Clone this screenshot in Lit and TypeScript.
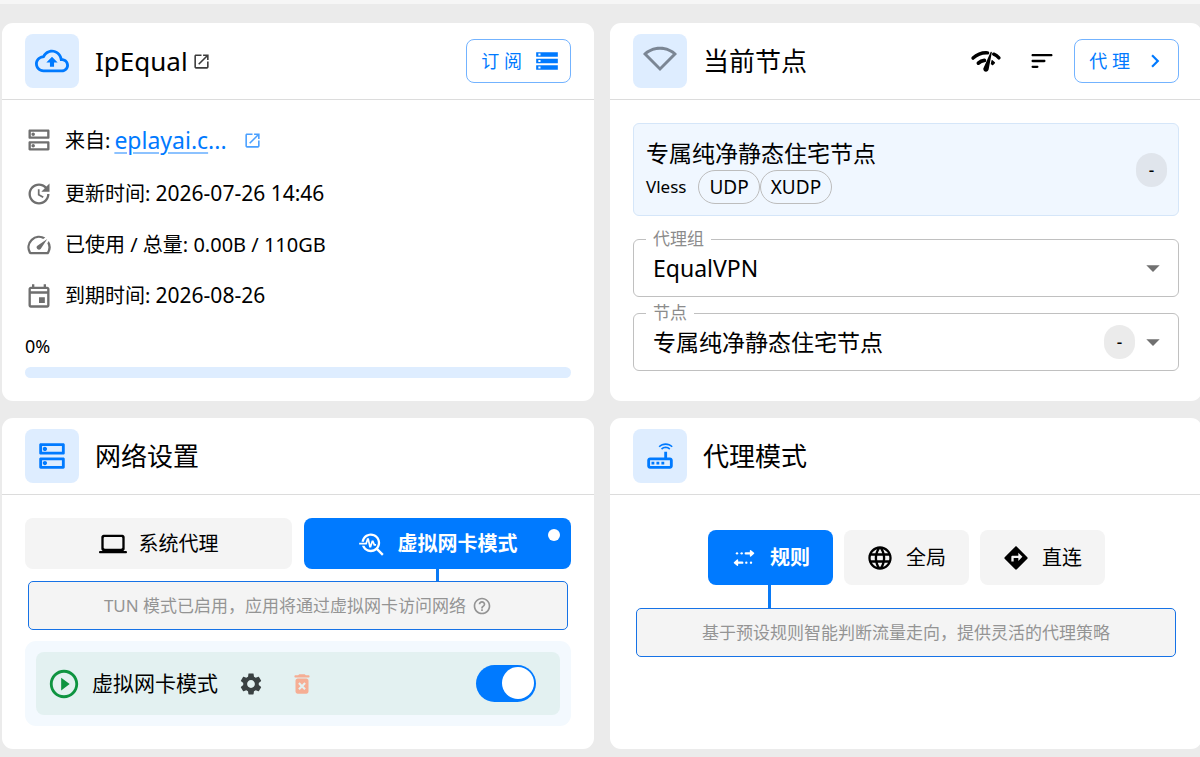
import { LitElement, html, css, svg } from "lit";
import { customElement, property, state } from "lit/decorators.js";

const PATHS: Record<string, string> = {
  cloud:
    "M19.35 10.04C18.67 6.59 15.64 4 12 4 9.11 4 6.6 5.64 5.35 8.04 2.34 8.36 0 10.91 0 14c0 3.31 2.69 6 6 6h13c2.76 0 5-2.24 5-5 0-2.64-2.05-4.78-4.65-4.96zM19 18H6c-2.21 0-4-1.79-4-4 0-2.05 1.53-3.76 3.56-3.97l1.07-.11.5-.95C8.08 7.14 9.94 6 12 6c2.62 0 4.88 1.86 5.39 4.43l.3 1.5 1.53.11c1.56.1 2.78 1.41 2.78 2.96 0 1.65-1.35 3-3 3zM8 13h2.55v3h2.9v-3H16l-4-4z",
  open: "M19 19H5V5h7V3H5c-1.11 0-2 .9-2 2v14c0 1.1.89 2 2 2h14c1.1 0 2-.9 2-2v-7h-2v7zM14 3v2h3.59l-9.83 9.83 1.41 1.41L19 6.41V10h2V3h-7z",
  storage:
    "M2 20h20v-4H2v4zm2-3h2v2H4v-2zM2 4v4h20V4H2zm4 3H4V5h2v2zm-4 7h20v-4H2v4zm2-3h2v2H4v-2z",
  dns: "M19 15v4H5v-4h14m1-2H4c-.55 0-1 .45-1 1v6c0 .55.45 1 1 1h16c.55 0 1-.45 1-1v-6c0-.55-.45-1-1-1zM7 18.5c-.82 0-1.5-.67-1.5-1.5s.68-1.5 1.5-1.5 1.5.67 1.5 1.5-.67 1.5-1.5 1.5zM19 5v4H5V5h14m1-2H4c-.55 0-1 .45-1 1v6c0 .55.45 1 1 1h16c.55 0 1-.45 1-1V4c0-.55-.45-1-1-1zM7 8.5c-.82 0-1.5-.67-1.5-1.5S6.18 5.5 7 5.5s1.5.68 1.5 1.5S7.83 8.5 7 8.5z",
  update:
    "M11 8v5l4.25 2.52.77-1.28-3.52-2.09V8H11zm10 2V3l-2.64 2.64C16.74 4.01 14.49 3 12 3c-4.97 0-9 4.03-9 9s4.03 9 9 9 9-4.03 9-9h-2c0 3.86-3.14 7-7 7s-7-3.14-7-7 3.14-7 7-7c1.93 0 3.68.79 4.95 2.05L14 10h7z",
  speed:
    "M20.38 8.57l-1.23 1.85a8 8 0 0 1-.22 7.58H5.07A8 8 0 0 1 15.58 6.85l1.85-1.23A10 10 0 0 0 3.35 19a2 2 0 0 0 1.72 1h13.85a2 2 0 0 0 1.74-1 10 10 0 0 0-.27-10.44zM10.59 15.41a2 2 0 0 0 2.83 0l5.66-8.49-8.49 5.66a2 2 0 0 0 0 2.83z",
  event:
    "M19 4h-1V2h-2v2H8V2H6v2H5c-1.11 0-1.99.9-1.99 2L3 20c0 1.1.89 2 2 2h14c1.1 0 2-.9 2-2V6c0-1.1-.9-2-2-2zm0 16H5V10h14v10zm0-12H5V6h14v2zm-7 5h5v5h-5v-5z",
  wifi: "M12 4c3.33 0 6.49 1.08 9.08 3.07L12 16.17l-9.08-9.1C5.51 5.08 8.67 4 12 4m0-2C7.31 2 3.07 3.9 0 6.98L12 19 24 6.98C20.93 3.9 16.69 2 12 2z",
  chevron: "M10 6 8.59 7.41 13.17 12l-4.58 4.59L10 18l6-6z",
  router:
    "M20.2 5.9l.8-.8C19.6 3.7 17.8 3 16 3s-3.6.7-5 2.1l.8.8C13 4.8 14.5 4.2 16 4.2s3 .6 4.2 1.7zm-.9.8c-.9-.9-2.1-1.4-3.3-1.4s-2.4.5-3.3 1.4l.8.8c.7-.7 1.6-1 2.5-1 .9 0 1.8.3 2.5 1l.8-.8zM19 13h-2V9h-2v4H5c-1.1 0-2 .9-2 2v4c0 1.1.9 2 2 2h14c1.1 0 2-.9 2-2v-4c0-1.1-.9-2-2-2zm0 6H5v-4h14v4zM6 16h2v2H6zm3.500 0h2v2h-2zm3.500 0h2v2h-2z",
  computer:
    "M20 18c1.1 0 1.99-.9 1.99-2L22 6c0-1.1-.9-2-2-2H4c-1.1 0-2 .9-2 2v10c0 1.1.9 2 2 2H1c-.55 0-1 .45-1 1s.45 1 1 1h22c.55 0 1-.45 1-1s-.45-1-1-1h-3zM5 6h14c.55 0 1 .45 1 1v8c0 .55-.45 1-1 1H5c-.55 0-1-.45-1-1V7c0-.55.45-1 1-1z",
  troubleshoot:
    "M22 20.59l-4.69-4.69C18.37 14.55 19 12.85 19 11c0-4.42-3.58-8-8-8-4.08 0-7.44 3.05-7.93 7h2.02C5.57 7.17 8.03 5 11 5c3.31 0 6 2.69 6 6s-2.69 6-6 6c-2.42 0-4.5-1.44-5.45-3.5H3.4C4.45 16.69 7.46 19 11 19c1.85 0 3.55-.63 4.9-1.69L20.59 22 22 20.59zM8.43 9.69 9.65 15h1.64l1.26-3.78.95 2.28h2V12h-1l-1.25-3h-1.54l-1.12 3.37L9.35 7H7.7l-1.25 4H1v1.500h6.550z",
  language:
    "M11.99 2C6.47 2 2 6.48 2 12s4.47 10 9.99 10C17.52 22 22 17.52 22 12S17.52 2 11.99 2zm6.93 6h-2.95c-.32-1.25-.78-2.45-1.38-3.56 1.84.63 3.37 1.91 4.33 3.56zM12 4.04c.83 1.2 1.48 2.53 1.91 3.96h-3.82c.43-1.43 1.08-2.76 1.91-3.96zM4.26 14C4.1 13.36 4 12.69 4 12s.1-1.36.26-2h3.38c-.08.66-.14 1.32-.14 2 0 .68.06 1.34.14 2H4.26zm.82 2h2.95c.32 1.25.78 2.45 1.38 3.56-1.84-.63-3.37-1.9-4.33-3.56zm2.95-8H5.08c.96-1.66 2.49-2.93 4.33-3.56C8.81 5.55 8.35 6.75 8.03 8zM12 19.96c-.83-1.2-1.48-2.53-1.91-3.96h3.82c-.43 1.43-1.08 2.76-1.91 3.96zM14.34 14H9.66c-.09-.66-.16-1.32-.16-2 0-.68.07-1.35.16-2h4.68c.09.65.16 1.32.16 2 0 .68-.07 1.34-.16 2zm.25 5.56c.6-1.11 1.06-2.31 1.38-3.56h2.95c-.96 1.65-2.49 2.93-4.33 3.56zM16.36 14c.08-.66.14-1.32.14-2 0-.68-.06-1.34-.14-2h3.38c.16.64.26 1.31.26 2s-.1 1.36-.26 2h-3.38z",
  directions:
    "M21.71 11.29l-9-9c-.39-.39-1.02-.39-1.41 0l-9 9c-.39.39-.39 1.02 0 1.41l9 9c.39.39 1.02.39 1.41 0l9-9c.39-.38.39-1.01 0-1.41zM14 14.5V12h-4v3H8v-4c0-.55.45-1 1-1h5V7.5l3.5 3.5-3.5 3.5z",
  help: "M11 18h2v-2h-2v2zm1-16C6.48 2 2 6.48 2 12s4.48 10 10 10 10-4.48 10-10S17.52 2 12 2zm0 18c-4.41 0-8-3.59-8-8s3.59-8 8-8 8 3.59 8 8-3.59 8-8 8zm0-14c-2.21 0-4 1.79-4 4h2c0-1.1.9-2 2-2s2 .9 2 2c0 2-3 1.75-3 5h2c0-2.25 3-2.5 3-5 0-2.21-1.79-4-4-4z",
  play: "M10 16.5l6-4.5-6-4.5v9zM12 2C6.48 2 2 6.48 2 12s4.48 10 10 10 10-4.48 10-10S17.52 2 12 2zm0 18c-4.41 0-8-3.59-8-8s3.59-8 8-8 8 3.59 8 8-3.59 8-8 8z",
  settings:
    "M19.14 12.94c.04-.3.06-.61.06-.94 0-.32-.02-.64-.07-.94l2.03-1.58c.18-.14.23-.41.12-.61l-1.92-3.32c-.12-.22-.37-.29-.59-.22l-2.39.96c-.5-.38-1.03-.7-1.62-.94l-.36-2.54c-.04-.24-.24-.41-.48-.41h-3.84c-.24 0-.43.17-.47.41l-.36 2.54c-.59.24-1.13.57-1.62.94l-2.39-.96c-.22-.08-.47 0-.59.22L2.74 8.87c-.12.21-.08.47.12.61l2.03 1.58c-.05.3-.09.63-.09.94s.02.64.07.94l-2.03 1.58c-.18.14-.23.41-.12.61l1.92 3.32c.12.22.37.29.59.22l2.39-.96c.5.38 1.03.7 1.62.94l.36 2.54c.05.24.24.41.48.41h3.84c.24 0 .44-.17.47-.41l.36-2.54c.59-.24 1.13-.56 1.62-.94l2.39.96c.22.08.47 0 .59-.22l1.92-3.32c.12-.22.07-.47-.12-.61l-2.01-1.58zM12 15.6c-1.98 0-3.6-1.62-3.6-3.6s1.62-3.6 3.6-3.6 3.6 1.62 3.6 3.6-1.62 3.6-3.6 3.6z",
  trash:
    "M6 19c0 1.1.9 2 2 2h8c1.1 0 2-.9 2-2V9c0-1.1-.9-2-2-2H8c-1.1 0-2 .9-2 2v10zm2.46-7.12 1.41-1.41L12 12.59l2.12-2.12 1.41 1.41L13.41 14l2.12 2.12-1.41 1.41L12 15.41l-2.12 2.12-1.41-1.41L10.59 14l-2.13-2.12zM15.5 4l-1-1h-5l-1 1H6c-.55 0-1 .45-1 1s.45 1 1 1h12c.55 0 1-.45 1-1s-.45-1-1-1z",
  sort: "M4 18h4c.55 0 1-.45 1-1s-.45-1-1-1H4c-.55 0-1 .45-1 1s.45 1 1 1zM3 7c0 .55.45 1 1 1h16c.55 0 1-.45 1-1s-.45-1-1-1H4c-.55 0-1 .45-1 1zm1 6h10c.55 0 1-.45 1-1s-.45-1-1-1H4c-.55 0-1 .45-1 1s.45 1 1 1z",
  drop: "M7 10l5 5 5-5z",
};

const NETWORK_CHECK = svg`
  <path d="M15.9 5c-.17 0-.32.09-.41.23l-.07.15-5.18 11.65c-.16.29-.26.61-.26.96 0 1.11.9 2.01 2.01 2.01.96 0 1.77-.68 1.96-1.59l.01-.03L16.4 5.5c0-.28-.22-.5-.5-.5z"/>
  <path d="M2.300 9.800C5.300 7.100 9.400 5.600 13.200 5.900M17.800 6.900C19.300 7.500 20.600 8.400 21.700 9.600" fill="none" stroke="currentColor" stroke-width="2.600" stroke-linecap="round"/>
  <path d="M6.300 13.600c1.200-1.100 2.700-1.800 4.500-2" fill="none" stroke="currentColor" stroke-width="2.800" stroke-linecap="round"/>
  <path d="M16.600 11.800l-.5 2.300.9.600 1.300-1.400z" stroke="currentColor" stroke-width="1" stroke-linejoin="round"/>`;

const MULTIPLE_STOP = svg`
  <path d="M13.500 8h5M10.500 16h-5" fill="none" stroke="currentColor" stroke-width="2" stroke-linecap="round"/>
  <path d="M17.600 5.700v4.600L20.200 8zM6.400 13.700v4.600L3.800 16z" stroke="currentColor" stroke-width="1.200" stroke-linejoin="round"/>
  <circle cx="10" cy="8" r="1"/><circle cx="6" cy="8" r="1"/><circle cx="14" cy="16" r="1"/><circle cx="18" cy="16" r="1"/>`;

function icon(name: string, size: number) {
  const body =
    name === "networkCheck"
      ? NETWORK_CHECK
      : name === "multipleStop"
        ? MULTIPLE_STOP
        : svg`<path d=${PATHS[name]} />`;
  return html`<svg class="icon" width=${size} height=${size} viewBox="0 0 24 24" fill="currentColor" aria-hidden="true">${body}</svg>`;
}

const base = css`
  * {
    box-sizing: border-box;
  }
  .icon {
    display: block;
    flex: none;
  }
  button {
    font: inherit;
    color: inherit;
    margin: 0;
    padding: 0;
    border: 0;
    background: none;
    cursor: pointer;
  }
`;

@customElement("panel-card")
export class PanelCard extends LitElement {
  @property() icon = "";
  @property() heading = "";
  @property({ type: Boolean }) muted = false;

  static styles = [
    base,
    css`
      :host {
        display: flex;
        flex-direction: column;
        min-width: 0;
        background: #fff;
        border-radius: 11px;
      }
      .head {
        display: flex;
        align-items: center;
        padding: 11px 23px;
        border-bottom: 1px solid #dcdcdc;
      }
      .badge {
        display: grid;
        place-items: center;
        width: 54px;
        height: 54px;
        margin-right: 16px;
        border-radius: 8px;
        background: #deedff;
        color: #007aff;
      }
      .badge.muted {
        color: #7b8694;
      }
      .heading {
        margin: 0;
        font-size: 26px;
        line-height: 36px;
        font-weight: 400;
      }
      .tools {
        display: flex;
        flex: 1;
        align-items: center;
      }
      .body {
        flex: 1;
        padding: 23px;
      }
    `,
  ];

  render() {
    return html`
      <header class="head">
        <div class="badge ${this.muted ? "muted" : ""}">${icon(this.icon, 34)}</div>
        <h2 class="heading">${this.heading}</h2>
        <div class="tools"><slot name="tools"></slot></div>
      </header>
      <div class="body"><slot></slot></div>
    `;
  }
}

@customElement("app-root")
export class AppRoot extends LitElement {
  @state() private mode = "rule";
  @state() private tab = "tun";

  static styles = [
    base,
    css`
      :host {
        display: block;
        min-height: 100vh;
        overflow: hidden;
        border-top: 4px solid #f6f6f6;
        background: #ebebeb;
        color: #000;
        font-family: "Noto Sans", "Noto Sans CJK SC", sans-serif;
        font-size: 20px;
        line-height: 29px;
      }
      .grid {
        display: grid;
        grid-template-columns: 1fr 1fr;
        grid-template-rows: auto minmax(330px, auto);
        gap: 17px 16px;
        margin: 19px -2px 9px 2px;
      }
      .grow {
        flex: 1;
      }
      .tool-link {
        margin-left: 4px;
        color: #3c3c3c;
      }
      .outlined {
        display: flex;
        align-items: center;
        gap: 12px;
        height: 44px;
        padding: 0 10px 0 14px;
        border: 1px solid #73b3ff;
        border-radius: 8px;
        color: #007aff;
        font-size: 18px;
        line-height: 26px;
      }
      .tool {
        margin-right: 18px;
      }
      .tool.wide {
        margin-right: 26px;
      }

      .facts {
        display: flex;
        flex-direction: column;
        gap: 22px;
      }
      .fact {
        display: flex;
        align-items: center;
        gap: 12px;
      }
      .fact .icon {
        color: #6f6f6f;
      }
      .fact.source {
        height: 34px;
      }
      .value {
        font-size: 21px;
      }
      .site {
        display: flex;
        align-items: center;
        gap: 16px;
        color: #007aff;
        font-size: 23px;
        line-height: 34px;
        text-decoration: none;
      }
      .site .icon {
        color: #4aa0ff;
      }
      .site .name {
        text-decoration: underline;
        text-decoration-color: #8cc2ff;
        text-decoration-thickness: 2px;
        text-underline-offset: 3px;
      }
      .source-text {
        display: flex;
        align-items: center;
        gap: 4px;
      }
      .percent {
        display: block;
        font-size: 18px;
        line-height: 28px;
      }
      .usage {
        display: block;
        appearance: none;
        width: 100%;
        height: 11px;
        margin-top: 7px;
        border: 0;
        border-radius: 6px;
        overflow: hidden;
        background: #deedff;
      }
      .usage::-webkit-progress-bar {
        background: #deedff;
      }
      .usage::-webkit-progress-value {
        background: #007aff;
      }

      .node {
        display: flex;
        align-items: center;
        justify-content: space-between;
        height: 93px;
        padding: 0 11px 0 12px;
        border: 1px solid #d5e6f9;
        border-radius: 6px;
        background: #f0f7ff;
      }
      .node-name {
        font-size: 23px;
        line-height: 34px;
      }
      .node-meta {
        display: flex;
        align-items: center;
        font-size: 17px;
        line-height: 24px;
      }
      .proto {
        margin-right: 12px;
      }
      .chip {
        padding: 0 10px;
        border: 1px solid #bdbdbd;
        border-radius: 17px;
        font-size: 19px;
        line-height: 32px;
      }
      .delay {
        flex: none;
        width: 31px;
        border-radius: 17px;
        background: #e0e5ec;
        font-size: 17px;
        font-weight: 500;
        line-height: 34px;
        text-align: center;
      }
      .delay.plain {
        background: #ebebeb;
      }
      .field {
        position: relative;
        display: flex;
        align-items: center;
        height: 58px;
        margin-top: 16px;
        border: 1px solid #c0c0c0;
        border-radius: 6px;
      }
      .field.first {
        margin-top: 23px;
      }
      .field label {
        position: absolute;
        top: -14px;
        left: 12px;
        padding: 0 7px;
        background: #fff;
        color: #8c8c8c;
        font-size: 17px;
        line-height: 26px;
      }
      .field select {
        flex: 1;
        min-width: 0;
        height: 100%;
        padding: 0 0 0 19px;
        border: 0;
        outline: 0;
        appearance: none;
        background: transparent;
        color: inherit;
        font: inherit;
        font-size: 23px;
        line-height: 34px;
      }
      .field .icon {
        margin: 0 9px 0 2px;
        color: #707070;
        pointer-events: none;
      }

      .tabs {
        display: grid;
        grid-template-columns: 1fr 1fr;
        gap: 12px;
      }
      .modes {
        display: flex;
        justify-content: center;
        gap: 11px;
        padding-top: 12px;
      }
      .choice {
        position: relative;
        display: flex;
        align-items: center;
        justify-content: center;
        gap: 12px;
        height: 51px;
        border-radius: 8px;
        background: #f4f4f4;
      }
      .modes .choice {
        width: 125px;
        height: 55px;
      }
      .choice.active {
        background: #007aff;
        color: #fff;
        font-weight: 700;
      }
      .choice.active::after {
        content: "";
        position: absolute;
        top: 100%;
        left: 50%;
        width: 3px;
        height: 12px;
        margin-left: -2px;
        background: #0a7af5;
      }
      .modes .choice.active::after {
        height: 23px;
      }
      .dot {
        position: absolute;
        top: 11px;
        right: 11px;
        width: 12px;
        height: 12px;
        border-radius: 50%;
        background: #fff;
      }
      .note {
        display: flex;
        align-items: center;
        justify-content: center;
        gap: 6px;
        min-height: 49px;
        margin: 12px 3px 0;
        border: 1px solid #1672e6;
        border-radius: 5px;
        background: #f4f4f4;
        color: #949494;
        font-size: 17px;
        line-height: 26px;
      }
      .note.far {
        margin-top: 23px;
      }
      .tray {
        margin-top: 11px;
        padding: 11px;
        border-radius: 11px;
        background: #f3f9fe;
      }
      .row {
        display: flex;
        align-items: center;
        height: 63px;
        padding: 0 24px 0 11px;
        border-radius: 8px;
        background: #e3f1f1;
        font-size: 21px;
      }
      .row .play {
        margin-right: 11px;
        color: #0e9440;
      }
      .gear {
        margin: 0 25px 0 20px;
        color: #3a4142;
      }
      .remove {
        color: #f6ae94;
      }
      .switch {
        appearance: none;
        width: 60px;
        height: 37px;
        margin: 0;
        padding: 2px 3px;
        border-radius: 19px;
        background: #007aff;
        cursor: pointer;
      }
      .switch::before {
        content: "";
        display: block;
        width: 32px;
        height: 32px;
        border-radius: 50%;
        background: #fff;
      }
      .switch:checked::before {
        margin-left: 23px;
      }
    `,
  ];

  private choice(id: string, label: string, glyph: string, current: string, pick: (id: string) => void) {
    const active = id === current;
    return html`<button class="choice ${active ? "active" : ""}" aria-pressed=${active} @click=${() => pick(id)}>
      ${icon(glyph, 28)}<span>${label}</span>${active && id === "tun" ? html`<span class="dot"></span>` : null}
    </button>`;
  }

  render() {
    const pickTab = (id: string) => (this.tab = id);
    const pickMode = (id: string) => (this.mode = id);
    return html`
      <main class="grid">
        <panel-card icon="cloud" heading="IpEqual">
          <a slot="tools" class="tool-link" href="#" aria-label="IpEqual">${icon("open", 19)}</a>
          <span slot="tools" class="grow"></span>
          <button slot="tools" class="outlined"><span>订 阅</span>${icon("storage", 26)}</button>
          <div class="facts">
            <div class="fact source">
              ${icon("dns", 28)}
              <div class="source-text">
                <span>来自:</span>
                <a class="site" href="#"><span><span class="name">eplayai.c</span>...</span>${icon("open", 19)}</a>
              </div>
            </div>
            <div class="fact">${icon("update", 28)}<span>更新时间: <span class="value">2026-07-26 14:46</span></span></div>
            <div class="fact">${icon("speed", 28)}<span>已使用 / 总量: 0.00B / 110GB</span></div>
            <div class="fact">${icon("event", 28)}<span>到期时间: <span class="value">2026-08-26</span></span></div>
            <div>
              <label class="percent" for="usage">0%</label>
              <progress class="usage" id="usage" max="100" value="0"></progress>
            </div>
          </div>
        </panel-card>

        <panel-card icon="wifi" heading="当前节点" muted>
          <span slot="tools" class="grow"></span>
          <button slot="tools" class="tool wide" aria-label="延迟测试">${icon("networkCheck", 32)}</button>
          <button slot="tools" class="tool" aria-label="排序">${icon("sort", 28)}</button>
          <button slot="tools" class="outlined"><span>代 理</span>${icon("chevron", 26)}</button>
          <div class="node">
            <div>
              <div class="node-name">专属纯净静态住宅节点</div>
              <div class="node-meta">
                <span class="proto">Vless</span><span class="chip">UDP</span><span class="chip">XUDP</span>
              </div>
            </div>
            <span class="delay">-</span>
          </div>
          <div class="field first">
            <label for="group">代理组</label>
            <select id="group"><option>EqualVPN</option></select>
            ${icon("drop", 32)}
          </div>
          <div class="field">
            <label for="node">节点</label>
            <select id="node"><option>专属纯净静态住宅节点</option></select>
            <span class="delay plain">-</span>${icon("drop", 32)}
          </div>
        </panel-card>

        <panel-card icon="dns" heading="网络设置">
          <div class="tabs">
            ${this.choice("system", "系统代理", "computer", this.tab, pickTab)}
            ${this.choice("tun", "虚拟网卡模式", "troubleshoot", this.tab, pickTab)}
          </div>
          <div class="note">TUN 模式已启用，应用将通过虚拟网卡访问网络 ${icon("help", 20)}</div>
          <div class="tray">
            <div class="row">
              <span class="play">${icon("play", 34)}</span>
              <label for="tun">虚拟网卡模式</label>
              <button class="gear" aria-label="设置">${icon("settings", 26)}</button>
              <button class="remove" aria-label="卸载">${icon("trash", 26)}</button>
              <span class="grow"></span>
              <input class="switch" id="tun" type="checkbox" role="switch" checked />
            </div>
          </div>
        </panel-card>

        <panel-card icon="router" heading="代理模式">
          <div class="modes">
            ${this.choice("rule", "规则", "multipleStop", this.mode, pickMode)}
            ${this.choice("global", "全局", "language", this.mode, pickMode)}
            ${this.choice("direct", "直连", "directions", this.mode, pickMode)}
          </div>
          <div class="note far">基于预设规则智能判断流量走向，提供灵活的代理策略</div>
        </panel-card>
      </main>
    `;
  }
}
